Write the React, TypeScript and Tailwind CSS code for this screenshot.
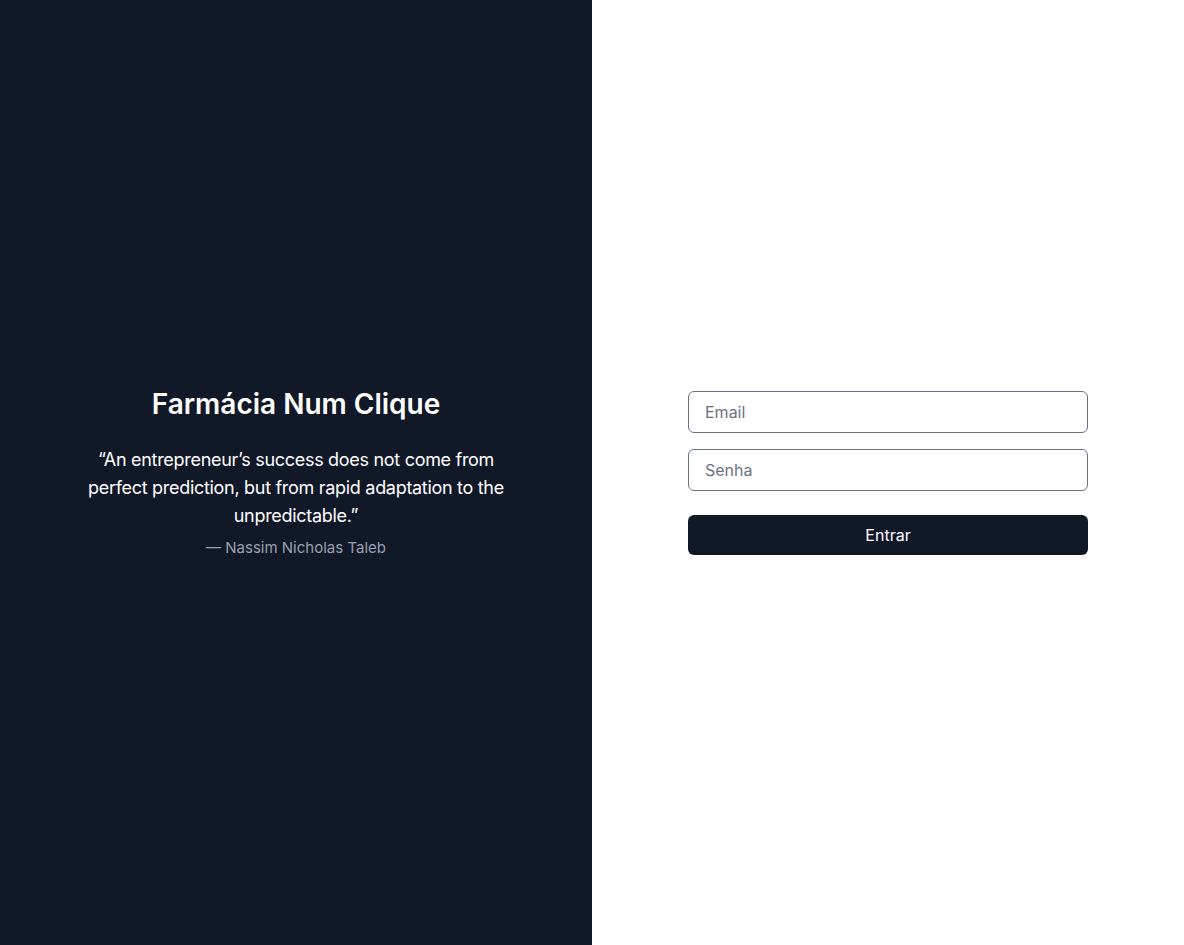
export default function App() {
  return (
    <div className="flex min-h-screen font-['Inter',sans-serif]">
      <aside className="flex w-1/2 flex-col items-center justify-center bg-[#111827] px-10 text-center text-white">
        <h1 className="text-[28px] font-semibold leading-9">Farmácia Num Clique</h1>
        <p className="mt-6 max-w-[430px] text-lg leading-7 tracking-[-0.3px]">
          “An entrepreneur’s success does not come from perfect prediction, but from rapid
          adaptation to the unpredictable.”
        </p>
        <p className="mt-1.5 text-[15px] leading-6 text-gray-400">— Nassim Nicholas Taleb</p>
      </aside>
      <main className="flex w-1/2 items-center justify-center bg-white">
        <form className="flex w-[400px] flex-col" onSubmit={(e) => e.preventDefault()}>
          <input
            type="email"
            placeholder="Email"
            className="h-[42px] rounded-md border border-gray-500 px-4 text-base text-gray-900 placeholder:text-gray-500 focus:outline-none"
          />
          <input
            type="password"
            placeholder="Senha"
            className="mt-4 h-[42px] rounded-md border border-gray-500 px-4 text-base text-gray-900 placeholder:text-gray-500 focus:outline-none"
          />
          <button
            type="submit"
            className="mt-6 h-10 rounded-md bg-[#111827] text-base font-normal text-white"
          >
            Entrar
          </button>
        </form>
      </main>
    </div>
  );
}
